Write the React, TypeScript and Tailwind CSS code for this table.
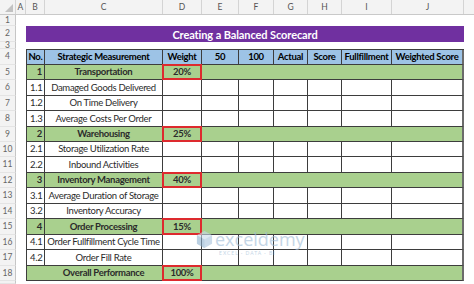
import React from "react";

type Row =
  | { kind: "group"; no: string; name: string; weight: string }
  | { kind: "item"; no: string; name: string }
  | { kind: "total"; name: string; weight: string };

const rows: Row[] = [
  { kind: "group", no: "1", name: "Transportation", weight: "20%" },
  { kind: "item", no: "1.1", name: "Damaged Goods Delivered" },
  { kind: "item", no: "1.2", name: "On Time Delivery" },
  { kind: "item", no: "1.3", name: "Average Costs Per Order" },
  { kind: "group", no: "2", name: "Warehousing", weight: "25%" },
  { kind: "item", no: "2.1", name: "Storage Utilization Rate" },
  { kind: "item", no: "2.2", name: "Inbound Activities" },
  { kind: "group", no: "3", name: "Inventory Management", weight: "40%" },
  { kind: "item", no: "3.1", name: "Average Duration of Storage" },
  { kind: "item", no: "3.2", name: "Inventory Accuracy" },
  { kind: "group", no: "4", name: "Order Processing", weight: "15%" },
  { kind: "item", no: "4.1", name: "Order Fullfillment Cycle Time" },
  { kind: "item", no: "4.2", name: "Order Fill Rate" },
  { kind: "total", name: "Overall Performance", weight: "100%" },
];

// row heights for rows 5..18
const heights = [
  "h-[15px]", "h-[16px]", "h-[15px]", "h-[16px]", "h-[15px]", "h-[15px]", "h-[16px]",
  "h-[15px]", "h-[16px]", "h-[15px]", "h-[16px]", "h-[15px]", "h-[16px]", "h-[15px]",
];

const colLetters = [
  { l: "A", w: "w-[10px]" },
  { l: "B", w: "w-[19px]" },
  { l: "C", w: "w-[118px]" },
  { l: "D", w: "w-[39px]" },
  { l: "E", w: "w-[37px]" },
  { l: "F", w: "w-[35px]" },
  { l: "G", w: "w-[34px]" },
  { l: "H", w: "w-[34px]" },
  { l: "I", w: "w-[50px]" },
  { l: "J", w: "w-[72px]" },
];

const line = "border-[#3d3d3d]";
const cell = `h-full shrink-0 border-r border-b ${line} flex items-center tracking-[-0.3px]`;
const green = "bg-[#a9d08e]";

function RowNum({ n, className = "" }: { n: number | string; className?: string }) {
  return (
    <div
      className={`w-[16px] h-full shrink-0 bg-[#f3f3f3] border-r border-b border-r-[#c6c6c6] border-b-[#e4e4e4] flex items-center justify-center text-[8.5px] text-[#666] ${className}`}
    >
      {n}
    </div>
  );
}

function Weight({ value }: { value: string }) {
  return (
    <div className={`${cell} w-[39px] relative justify-center font-bold ${green}`}>
      <div className="absolute -inset-[1px] border-2 border-[#dd2a2e]" />
      {value}
    </div>
  );
}

function BodyRow({ row, n, h }: { row: Row; n: number; h: string }) {
  return (
    <div className={`flex ${h}`}>
      <RowNum n={n} />
      <div className="w-[10px] shrink-0" />
      {row.kind === "item" && (
        <>
          <div className={`${cell} w-[19px] border-l pl-[3px]`}>{row.no}</div>
          <div className={`${cell} w-[118px] justify-center`}>{row.name}</div>
          <div className={`${cell} w-[39px]`} />
          <div className={`${cell} w-[37px]`} />
          <div className={`${cell} w-[35px]`} />
          <div className={`${cell} w-[34px]`} />
          <div className={`${cell} w-[34px]`} />
          <div className={`${cell} w-[50px]`} />
          <div className={`${cell} w-[72px] border-r-[#6b6b6b] border-r-2`} />
        </>
      )}
      {row.kind === "group" && (
        <>
          <div className={`${cell} w-[19px] border-l justify-end pr-[2px] font-bold ${green}`}>{row.no}</div>
          <div className={`${cell} w-[118px] justify-center font-bold ${green}`}>{row.name}</div>
          <Weight value={row.weight} />
          <div className={`${cell} w-[262px] ${green} border-r-[#6b6b6b] border-r-2`} />
        </>
      )}
      {row.kind === "total" && (
        <>
          <div className={`${cell} w-[137px] border-l justify-center pl-[18px] font-bold ${green}`}>{row.name}</div>
          <Weight value={row.weight} />
          <div className={`${cell} w-[262px] ${green} border-r-[#6b6b6b] border-r-2`} />
        </>
      )}
    </div>
  );
}

export default function App() {
  return (
    <div className="w-[474px] h-[284px] overflow-hidden bg-white relative whitespace-nowrap font-['Lato','Liberation_Sans',sans-serif] text-[9.5px] text-[#2b2b2b] leading-none">
      {/* column letters */}
      <div className="flex h-[15px] bg-[#f3f3f3] border-b border-[#c9c9c9]">
        <div className="w-[16px] h-full shrink-0 border-r border-[#d4d4d4] relative">
          <div className="absolute right-[2px] bottom-[2px] w-0 h-0 border-l-[8px] border-l-transparent border-b-[8px] border-b-[#c2c2c2]" />
        </div>
        {colLetters.map((c) => (
          <div
            key={c.l}
            className={`${c.w} h-full shrink-0 border-r border-[#d4d4d4] flex items-center justify-center text-[8.5px] text-[#555]`}
          >
            {c.l}
          </div>
        ))}
        <div className="flex-1" />
      </div>

      {/* row 1 */}
      <div className="flex h-[11px]">
        <RowNum n={1} />
      </div>

      {/* row 2 title */}
      <div className="flex h-[16px]">
        <RowNum n={2} />
        <div className="w-[10px] shrink-0" />
        <div className="w-[438px] h-full shrink-0 bg-[#7030a0] flex items-center justify-center text-white font-bold text-[11px] tracking-[-0.1px]">
          Creating a Balanced Scorecard
        </div>
      </div>

      {/* row 3 */}
      <div className="flex h-[7px]">
        <RowNum n={3} className="text-[7.5px]" />
      </div>

      {/* row 4 header */}
      <div className="flex h-[16px]">
        <RowNum n={4} />
        <div className="w-[10px] shrink-0" />
        <div className="flex h-full border-t border-[#3d3d3d] bg-[#9dc3e6] font-bold text-black">
          <div className={`${cell} w-[19px] border-l justify-center`}>No.</div>
          <div className={`${cell} w-[118px] justify-center`}>Strategic Measurement</div>
          <div className={`${cell} w-[39px] justify-center`}>Weight</div>
          <div className={`${cell} w-[37px] justify-center`}>50</div>
          <div className={`${cell} w-[35px] justify-center`}>100</div>
          <div className={`${cell} w-[34px] justify-center`}>Actual</div>
          <div className={`${cell} w-[34px] justify-center`}>Score</div>
          <div className={`${cell} w-[50px] justify-center`}>Fullfillment</div>
          <div className={`${cell} w-[72px] justify-center border-r-2 border-r-[#6b6b6b]`}>Weighted Score</div>
        </div>
      </div>

      {rows.map((r, i) => (
        <BodyRow key={i} row={r} n={i + 5} h={heights[i]} />
      ))}

      <div className="flex h-[3px]">
        <RowNum n="" />
      </div>

      {/* watermark */}
      <div className="absolute left-[196px] top-[230px] flex items-start gap-[2px] opacity-60 pointer-events-none">
        <svg width="17" height="19" viewBox="0 0 18 20">
          <path d="M9 1 L17 5.5 L17 14.5 L9 19 L1 14.5 L1 5.5 Z" fill="#a9c4dd" />
          <path d="M9 1 L17 5.5 L9 10 L1 5.5 Z" fill="#c9dbea" />
          <path d="M9 10 L9 19 L1 14.5 L1 5.5 Z" fill="#8fb1cf" />
        </svg>
        <div className="flex flex-col items-start">
          <span className="text-[18px] text-[#9dbbd6] font-['Open_Sans','Liberation_Sans',sans-serif] leading-none">exceldemy</span>
          <span className="text-[5px] text-[#9dbbd6] tracking-[1px] mt-[3px] ml-[4px]">EXCEL · DATA · BI</span>
        </div>
      </div>
    </div>
  );
}
